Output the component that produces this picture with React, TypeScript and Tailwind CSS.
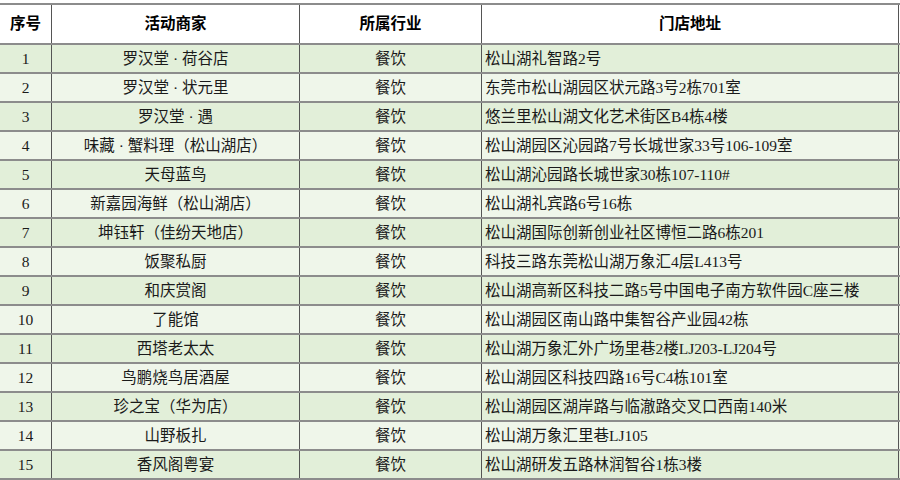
const rows: [string, string, string][] = [
  ["罗汉堂 · 荷谷店", "餐饮", "松山湖礼智路2号"],
  ["罗汉堂 · 状元里", "餐饮", "东莞市松山湖园区状元路3号2栋701室"],
  ["罗汉堂 · 遇", "餐饮", "悠兰里松山湖文化艺术街区B4栋4楼"],
  ["味藏 · 蟹料理（松山湖店）", "餐饮", "松山湖园区沁园路7号长城世家33号106-109室"],
  ["天母蓝鸟", "餐饮", "松山湖沁园路长城世家30栋107-110#"],
  ["新嘉园海鲜（松山湖店）", "餐饮", "松山湖礼宾路6号16栋"],
  ["坤钰轩（佳纷天地店）", "餐饮", "松山湖国际创新创业社区博恒二路6栋201"],
  ["饭聚私厨", "餐饮", "科技三路东莞松山湖万象汇4层L413号"],
  ["和庆赏阁", "餐饮", "松山湖高新区科技二路5号中国电子南方软件园C座三楼"],
  ["了能馆", "餐饮", "松山湖园区南山路中集智谷产业园42栋"],
  ["西塔老太太", "餐饮", "松山湖万象汇外广场里巷2楼LJ203-LJ204号"],
  ["鸟鹏烧鸟居酒屋", "餐饮", "松山湖园区科技四路16号C4栋101室"],
  ["珍之宝（华为店）", "餐饮", "松山湖园区湖岸路与临澈路交叉口西南140米"],
  ["山野板扎", "餐饮", "松山湖万象汇里巷LJ105"],
  ["香风阁粤宴", "餐饮", "松山湖研发五路林润智谷1栋3楼"],
];

const cols = "grid grid-cols-[52px_248px_182px_417px]";

export default function App() {
  return (
    <div
      className="w-[900px] h-[480px] overflow-hidden bg-white pt-[3px] text-[15.5px] text-[#1a1a1a]"
      style={{ fontFamily: '"Liberation Serif", "Noto Sans CJK SC", serif' }}
    >
      {/* header */}
      <div className={`${cols} h-[42px] border-t-2 border-b-2 border-[#8c8c8c] font-bold text-black`}>
        <div className="flex items-center justify-center border-r border-[#555]">序号</div>
        <div className="flex items-center justify-center border-r border-[#555]">活动商家</div>
        <div className="flex items-center justify-center border-r border-[#555]">所属行业</div>
        <div className="flex items-center justify-center border-r border-[#555]">门店地址</div>
      </div>
      {rows.map((r, i) => (
        <div
          key={i}
          className={`${cols} h-[29px] border-b-2 border-[#8c8c8c] ${
            i % 2 === 0 ? "bg-[#e2efd9]" : "bg-[#eff6ea]"
          }`}
        >
          <div className="flex items-center justify-center pt-[1px] border-r border-[#555]">{i + 1}</div>
          <div className="flex items-center justify-center pt-[1px] border-r border-[#555]">{r[0]}</div>
          <div className="flex items-center justify-center pt-[1px] border-r border-[#555]">{r[1]}</div>
          <div className="flex items-center pl-[3px] pt-[1px] border-r border-[#555] whitespace-nowrap">{r[2]}</div>
        </div>
      ))}
    </div>
  );
}
